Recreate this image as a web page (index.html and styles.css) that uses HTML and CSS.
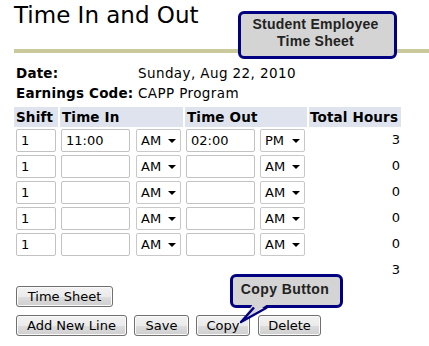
FILE: index.html
```html
<!DOCTYPE html>
<html>
<head>
<meta charset="utf-8">
<link rel="stylesheet" href="styles.css">
</head>
<body>
<div class="page">
  <h1 class="title">Time In and Out</h1>
  <div class="rule"></div>
  <div class="info">
    <div class="lbl">Date:</div><div class="val">Sunday, Aug 22, 2010</div>
    <div class="lbl">Earnings Code:</div><div class="val">CAPP Program</div>
  </div>
  <div class="grid">
    <div class="th">Shift</div>
    <div class="th">Time In</div>
    <div class="th">Time Out</div>
    <div class="th">Total Hours</div>

    <div class="cell"><input class="inp shift" value="1"></div>
    <div class="cell pair"><input class="inp time" value="11:00"><span class="sel">AM</span></div>
    <div class="cell pair"><input class="inp time" value="02:00"><span class="sel">PM</span></div>
    <div class="cell num">3</div>

    <div class="cell"><input class="inp shift" value="1"></div>
    <div class="cell pair"><input class="inp time" value=""><span class="sel">AM</span></div>
    <div class="cell pair"><input class="inp time" value=""><span class="sel">AM</span></div>
    <div class="cell num">0</div>

    <div class="cell"><input class="inp shift" value="1"></div>
    <div class="cell pair"><input class="inp time" value=""><span class="sel">AM</span></div>
    <div class="cell pair"><input class="inp time" value=""><span class="sel">AM</span></div>
    <div class="cell num">0</div>

    <div class="cell"><input class="inp shift" value="1"></div>
    <div class="cell pair"><input class="inp time" value=""><span class="sel">AM</span></div>
    <div class="cell pair"><input class="inp time" value=""><span class="sel">AM</span></div>
    <div class="cell num">0</div>

    <div class="cell"><input class="inp shift" value="1"></div>
    <div class="cell pair"><input class="inp time" value=""><span class="sel">AM</span></div>
    <div class="cell pair"><input class="inp time" value=""><span class="sel">AM</span></div>
    <div class="cell num">0</div>

    <div class="cell num total">3</div>
  </div>
  <div class="btnrow first"><button class="btn btn-sheet">Time Sheet</button></div>
  <div class="btnrow"><button class="btn btn-add">Add New Line</button><button class="btn btn-save">Save</button><button class="btn btn-copy">Copy</button><button class="btn btn-delete">Delete</button></div>

  <div class="callout callout-title">Student Employee<br>Time Sheet</div>
  <div class="callout callout-copy">Copy Button</div>
  <svg class="tail" width="36" height="24" viewBox="0 0 36 24">
    <polygon points="17,2 32,2 5,20" fill="#d4d4d4"/>
    <polyline points="18,5.5 5,20 31,5.5" fill="none" stroke="#000080" stroke-width="2.5" stroke-linejoin="round"/>
  </svg>
</div>
</body>
</html>
```
FILE: styles.css
```css
* { box-sizing: border-box; }
html, body { margin: 0; padding: 0; background: #fff; }
body {
  font-family: "DejaVu Sans", Verdana, sans-serif;
  font-size: 13px;
  color: #000;
  width: 429px;
  height: 346px;
  overflow: hidden;
}
.page {
  position: relative;
  padding-left: 14px;
}
.title {
  margin: 1px 0 0 0;
  font-weight: normal;
  font-size: 23px;
  line-height: 28px;
}
.rule {
  margin-top: 20px;
  height: 4px;
  background: #c9c99b;
}
.info {
  margin-top: 10px;
  display: grid;
  grid-template-columns: 124px auto;
  grid-auto-rows: 20px;
  line-height: 20px;
}
.lbl {
  padding-left: 2px;
  font-weight: bold;
  font-size: 13.5px;
  letter-spacing: 0.2px;
  white-space: nowrap;
}
.val {
  font-size: 13.5px;
  letter-spacing: 0.4px;
  white-space: nowrap;
}
.grid {
  margin-top: 4px;
  display: grid;
  grid-template-columns: 44px 123px 122px 92px;
  column-gap: 2px;
  grid-template-rows: 20px;
  grid-auto-rows: 26px;
}
.th {
  background: #dfe3ed;
  font-weight: bold;
  font-size: 13.5px;
  letter-spacing: 0.15px;
  line-height: 20px;
  padding-left: 2px;
  white-space: nowrap;
  margin-bottom: 1px;
  height: 20px;
}
.grid > .th:nth-child(4) { padding-left: 1px; }
.cell {
  display: flex;
  align-items: center;
  margin-top: 1px;
}
.pair {
  justify-content: space-between;
  padding: 0 2px 0 1px;
}
.inp {
  height: 23px;
  border: 1px solid #c2c2c2;
  border-radius: 2px;
  font-family: "DejaVu Sans", Verdana, sans-serif;
  font-size: 13px;
  color: #000;
  padding: 0 0 0 4px;
  margin: 0;
  background: #fff;
  outline: none;
}
.shift { width: 40px; margin-left: 2px; }
.time { width: 69px; }
.sel {
  position: relative;
  display: inline-block;
  width: 45px;
  height: 23px;
  line-height: 21px;
  border: 1px solid #c8c8c8;
  border-radius: 2px;
  padding-left: 4px;
  background: #fff;
}
.sel::after {
  content: "";
  position: absolute;
  right: 4px;
  top: 9px;
  border-left: 4px solid transparent;
  border-right: 4px solid transparent;
  border-top: 4px solid #000;
}
.num {
  justify-content: flex-end;
  padding-right: 1px;
  padding-bottom: 2px;
}
.total { grid-column: 4; }
.btnrow {
  display: flex;
  gap: 7px;
  padding-left: 2px;
  margin-top: 8px;
}
.btnrow.first { margin-top: 3px; }
.btn {
  height: 21px;
  padding: 0;
  margin: 0;
  text-align: center;
  font-family: "DejaVu Sans", Verdana, sans-serif;
  font-size: 13px;
  color: #000;
  border: 1px solid #707070;
  border-radius: 3px;
  background: linear-gradient(to bottom, #f2f2f2 0%, #ebebeb 50%, #dddddd 51%, #cfcfcf 100%);
  box-shadow: inset 0 0 0 1px #fafafa;
  line-height: 19px;
  white-space: nowrap;
}
.btn-sheet { width: 97px; }
.btn-add { width: 111px; }
.btn-save { width: 55px; }
.btn-copy { width: 54px; }
.btn-delete { width: 63px; margin-left: 1px; }
.callout {
  position: absolute;
  border: 3px solid #000080;
  border-radius: 6px;
  background: #d4d4d4;
  color: #222;
  font-family: "Liberation Sans", Arial, sans-serif;
  font-weight: bold;
  font-size: 14px;
  line-height: 17px;
  letter-spacing: 0.25px;
  text-align: center;
}
.callout-title {
  left: 238px;
  top: 10px;
  width: 159px;
  height: 48px;
  padding: 2px 4px 0 0;
}
.callout-copy {
  left: 230px;
  top: 273px;
  width: 113px;
  height: 34px;
  padding: 4px 3px 0 0;
  letter-spacing: 0.4px;
}
.tail {
  position: absolute;
  left: 236px;
  top: 301px;
}
```
